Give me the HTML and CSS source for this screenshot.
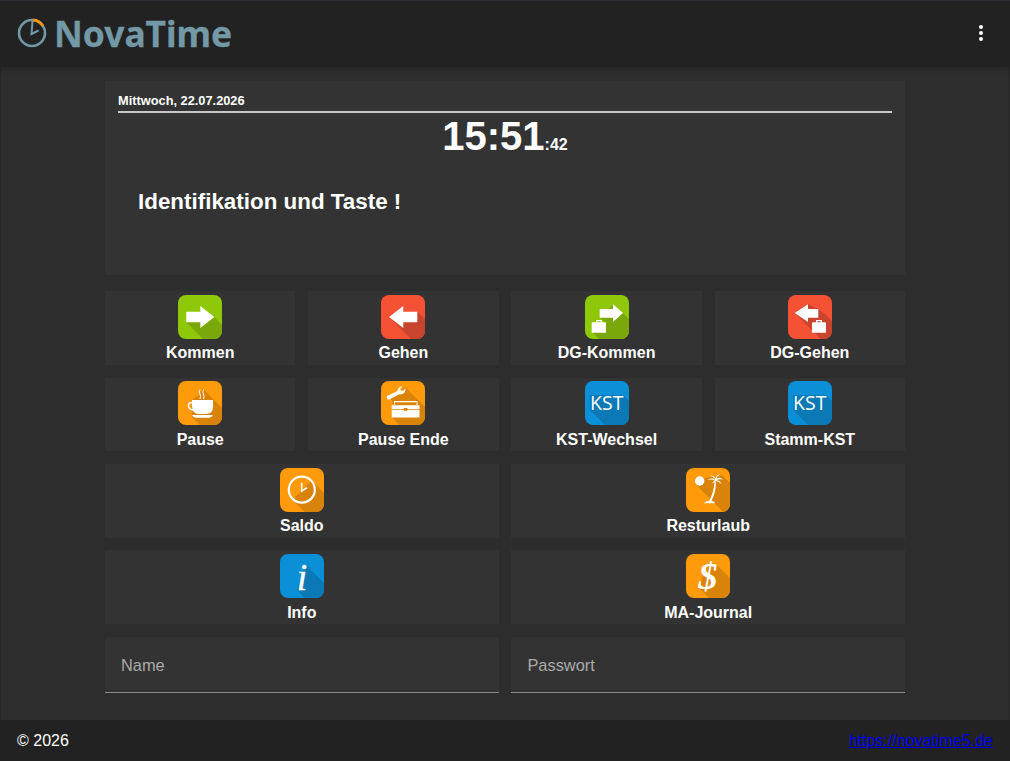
FILE: index.html
```html
<!DOCTYPE html>
<html lang="de">
<head>
<meta charset="utf-8">
<title>NovaTime</title>
<link rel="stylesheet" href="styles.css">
</head>
<body>
<header class="topbar">
  <div class="brand">
    <svg class="brand-icon" viewBox="0 0 32 32" width="32" height="32">
      <circle cx="16" cy="16" r="13" fill="none" stroke="#7299a5" stroke-width="2.6"/>
      <path d="M17 3 A13 13 0 0 1 27 9" fill="none" stroke="#f7930a" stroke-width="2.8"/>
      <path d="M16.5 4 L15.5 17 L22.5 13.5" fill="none" stroke="#7299a5" stroke-width="2"/>
    </svg>
    <span class="brand-name">NovaTime</span>
  </div>
  <div class="kebab"><i></i><i></i><i></i></div>
</header>

<main class="content">
  <section class="panel">
    <div class="date">Mittwoch, 22.07.2026</div>
    <div class="clock">15:51<small>:42</small></div>
    <div class="message">Identifikation und Taste !</div>
  </section>

  <div class="grid four">
    <button class="tile">
      <svg class="icon green" viewBox="0 0 44 44"><rect class="bg" width="44" height="44"/><path class="sh" d="M8.3 27.3L25 44H44V30L36.3 22Z"/><path class="fg" d="M8.3 16.7H22.3V11L36.3 22L22.3 33V27.3H8.3Z"/></svg>
      <span>Kommen</span>
    </button>
    <button class="tile">
      <svg class="icon red" viewBox="0 0 44 44"><rect class="bg" width="44" height="44"/><path class="sh" d="M8 22L30 44H44V24.4L36.3 16.7Z"/><path class="fg" d="M36.3 16.7H22.3V11L8 22L22.3 33V27.3H36.3Z"/></svg>
      <span>Gehen</span>
    </button>
    <button class="tile">
      <svg class="icon green" viewBox="0 0 44 44"><rect class="bg" width="44" height="44"/><path class="sh" d="M7 37L14 44H44V24L38 18L28 10L15 22L21 28V37Z"/><path class="fg" d="M14.7 14H28V9.3L38 18L28 27V22.7H14.7Z"/><path class="fg" fill-rule="evenodd" d="M6.7 28.5Q6.7 27.3 8 27.3H11V25H17V27.3H19.7Q21 27.3 21 28.5V37.7H6.7ZM12.2 26.2V27.3H15.8V26.2Z"/></svg>
      <span>DG-Kommen</span>
    </button>
    <button class="tile">
      <svg class="icon red" viewBox="0 0 44 44"><rect class="bg" width="44" height="44"/><path class="sh" d="M6.7 18L32.7 44H44V26L38 20L30 14L20 9Z"/><path class="fg" d="M30.3 14H20V9.3L6.7 18L20 27V22.7H30.3Z"/><path class="fg" fill-rule="evenodd" d="M24 28.5Q24 27.3 25.3 27.3H28V25H34V27.3H36.7Q38 27.3 38 28.5V37.7H24ZM29.2 26.2V27.3H32.8V26.2Z"/></svg>
      <span>DG-Gehen</span>
    </button>
    <button class="tile">
      <svg class="icon orange" viewBox="0 0 44 44"><rect class="bg" width="44" height="44"/><path class="sh" d="M14 36L22 44H44V27L25 8L21 14L14 19Z"/><path class="fg" d="M14 19H35V25Q35 33 28 33H21Q14 33 14 25ZM14 34H35Q34 36.7 31 36.7H18Q15 36.7 14 34Z"/><path d="M14.5 21.5Q10 21.5 10.5 25Q11 28.5 16 29" fill="none" stroke="#fff" stroke-width="1.6"/><path d="M22 8.5Q20.5 11 22 13Q23 15 22 18M25.5 8.5Q24 11 25.5 13Q26.5 15 25.5 18" fill="none" stroke="#fff" stroke-width="1"/></svg>
      <span>Pause</span>
    </button>
    <button class="tile">
      <svg class="icon orange" viewBox="0 0 44 44"><rect class="bg" width="44" height="44"/><path class="sh" d="M10.7 36L18.7 44H44V26L24 6L20 12L8 16L12 21Z"/><path class="fg" d="M6 15L16.5 10Q16.5 6.5 20 5.5L21.5 5.7L19.2 7.7L20 10L22.5 9.5L24.3 7Q25.3 11 21.5 13Q19.5 13.8 18 13.3L8 18.8Q5 18.5 6 15Z"/><path class="fg" d="M13 20H36.5V24H35.5V21.2H14V24H13Z"/><path class="fg" d="M10.7 24.3H38.5V28H26.5V27H22.7V28H10.7ZM10.7 28.7H22.7V29.7H26.5V28.7H38.5V36.5H10.7Z"/></svg>
      <span>Pause Ende</span>
    </button>
    <button class="tile">
      <svg class="icon blue" viewBox="0 0 44 44"><rect class="bg" width="44" height="44"/><path class="sh" d="M5 29L20 44H44V20L38 14H5Z"/><text class="kst" x="21.7" y="29">KST</text></svg>
      <span>KST-Wechsel</span>
    </button>
    <button class="tile">
      <svg class="icon blue" viewBox="0 0 44 44"><rect class="bg" width="44" height="44"/><path class="sh" d="M5 29L20 44H44V20L38 14H5Z"/><text class="kst" x="21.7" y="29">KST</text></svg>
      <span>Stamm-KST</span>
    </button>
  </div>

  <div class="grid two">
    <button class="tile">
      <svg class="icon orange" viewBox="0 0 44 44"><rect class="bg" width="44" height="44"/><path class="sh" d="M12.3 31.7L24.6 44H44V25L31.7 12.3Z"/><circle cx="21.8" cy="21.7" r="13" fill="none" stroke="#fff" stroke-width="2.2"/><path d="M21.7 14.7V23L27 19.8" fill="none" stroke="#fff" stroke-width="1.6"/></svg>
      <span>Saldo</span>
    </button>
    <button class="tile">
      <svg class="icon orange" viewBox="0 0 44 44"><rect class="bg" width="44" height="44"/><path class="sh" d="M10 16.7L37.3 44H44V15L36 7L26 9L20 9.5Z"/><circle class="fg" cx="13.7" cy="13" r="4.7"/><path class="fg" d="M28.6 13.5H29.8Q30.3 24 25.5 32.7Q28.5 33.3 29.3 35.2H17.7Q20 33 23.3 32.7Q27.8 24 28.6 13.5Z"/><path class="fg" d="M29 11.5Q26 9.5 21.7 12Q25 10.8 29 12.5ZM29 11Q27 8 24 7.7Q27 6.5 29.6 10Q31 6 34 6.5Q31.5 7.5 30.3 10.7Q33.5 8.5 37 11.5Q33.5 10.7 30.5 12Q34 12.5 35.5 16Q32.5 13.5 29.8 12.8Q29 15 26 15.3Q27.8 13.5 29 11Z"/></svg>
      <span>Resturlaub</span>
    </button>
    <button class="tile">
      <svg class="icon blue" viewBox="0 0 44 44"><rect class="bg" width="44" height="44"/><path class="sh" d="M17 36L25 44H44V29L26 11L22 20Z"/><text class="glyph i" x="22" y="36">i</text></svg>
      <span>Info</span>
    </button>
    <button class="tile">
      <svg class="icon orange" viewBox="0 0 44 44"><rect class="bg" width="44" height="44"/><path class="sh" d="M13 34L23 44H44V24L30 10L20 12Z"/><text class="glyph dollar" x="22" y="35">$</text></svg>
      <span>MA-Journal</span>
    </button>
  </div>

  <form class="grid two login">
    <input class="field" type="text" placeholder="Name">
    <input class="field" type="password" placeholder="Passwort">
  </form>
</main>

<footer class="bottombar">
  <span>© 2026</span>
  <a href="#">https://novatime5.de</a>
</footer>
</body>
</html>
```
FILE: styles.css
```css
* { box-sizing: border-box; }
html, body { margin: 0; height: 100%; }
body {
  display: flex;
  flex-direction: column;
  height: 761px;
  overflow: hidden;
  background: #2d2d2d;
  color: #fff;
  font-family: "Liberation Sans", Arial, sans-serif;
  font-size: 16px;
}
.topbar {
  flex: 0 0 67px;
  position: relative;
  z-index: 1;
  display: flex;
  align-items: center;
  justify-content: space-between;
  padding: 0 27px 0 16px;
  background: #222;
  border-top: 1px solid #2f2f35;
  box-shadow: 0 2px 6px rgba(0, 0, 0, .2);
}
.brand { display: flex; align-items: center; gap: 7px; }
.brand-icon { display: block; flex: none; margin-top: -2px; }
.brand-name {
  font-family: "Noto Sans", "Open Sans", sans-serif;
  font-weight: 700;
  font-size: 35.4px;
  line-height: 40px;
  color: #7299a5;
  margin: -2px 0 0 -1px;
  -webkit-text-stroke: .3px #7299a5;
}
.kebab { display: flex; flex-direction: column; gap: 2px; margin-top: -2px; }
.kebab i { display: block; width: 4px; height: 4px; border-radius: 50%; background: #fff; }
.content {
  flex: 1;
  padding: 13.8px 104px 0;
  border-left: 1px solid #262626;
  border-right: 1px solid #262626;
}
.panel {
  height: 194.4px;
  margin-bottom: 16px;
  padding: 13px 13px 0;
  background: #333;
}
.date {
  height: 19px;
  font-size: 12.8px;
  font-weight: 700;
  line-height: 14px;
  border-bottom: 2px solid #c8c8c8;
}
.clock {
  height: 44px;
  text-align: center;
  font-size: 40px;
  font-weight: 700;
  line-height: 46px;
}
.clock small { font-size: 16px; }
.message {
  margin-top: 32px;
  padding-left: 20px;
  font-size: 22.4px;
  font-weight: 700;
  line-height: 26px;
}
.grid { display: grid; gap: 12.8px; margin-bottom: 12.8px; }
.four { grid-template-columns: repeat(4, 1fr); }
.two { grid-template-columns: repeat(2, 1fr); }
.tile {
  display: flex;
  flex-direction: column;
  align-items: center;
  height: 73.6px;
  padding: 3.6px 0 0;
  border: 0;
  background: #333;
  color: #fff;
  font: 700 16px/18px "Liberation Sans", Arial, sans-serif;
}
.tile span { margin-top: 5.6px; }
.icon { display: block; width: 44px; height: 44px; border-radius: 8px; overflow: hidden; flex: none; }
.green .bg { fill: #8fc808; } .green .sh { fill: #7aa80a; }
.red .bg { fill: #f55135; } .red .sh { fill: #c9442d; }
.orange .bg { fill: #ff9a0a; } .orange .sh { fill: #d9830a; }
.blue .bg { fill: #0b8fd6; } .blue .sh { fill: #0a79b5; }
.fg { fill: #fff; }
.kst {
  fill: #fff;
  font-family: "Open Sans", sans-serif;
  font-size: 19.5px;
  font-weight: 400;
  text-anchor: middle;
}
.glyph {
  fill: #fff;
  font-family: "Liberation Serif", serif;
  font-style: italic;
  text-anchor: middle;
}
.i { font-size: 38px; font-weight: 400; stroke: #fff; stroke-width: .4px; }
.dollar { font-size: 38px; font-weight: 700; }
.login { margin-bottom: 0; }
.field {
  display: block;
  width: 100%;
  height: 56px;
  padding: 2px 16px 0;
  border: 0;
  border-bottom: 1px solid #8a8a8a;
  border-radius: 4px 4px 0 0;
  outline: 0;
  background: #333;
  color: #fff;
  font: 16.4px "Liberation Sans", Arial, sans-serif;
}
.field::placeholder { color: #aaa; opacity: 1; }
.bottombar {
  flex: 0 0 41px;
  display: flex;
  align-items: center;
  justify-content: space-between;
  padding: 0 17px;
  background: #222;
}
.bottombar a { color: #0000ee; }
```
